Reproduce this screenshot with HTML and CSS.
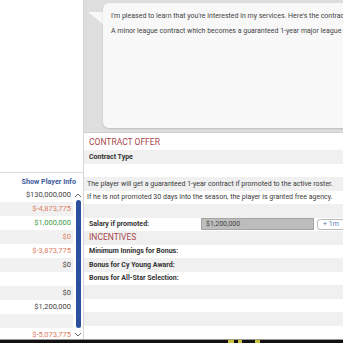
FILE: index.html
```html
<!DOCTYPE html>
<html lang="en">
<head>
    <meta charset="UTF-8">
    <meta name="viewport" content="width=device-width, initial-scale=1.0">
    <title>Contract Offer</title>
    <link rel="stylesheet" href="styles.css">
</head>
<body>
    <div class="screen">
        <aside class="side">
            <div class="side-top"></div>
            <div class="side-list">
                <div class="side-head">Show Player Info</div>
                <div class="side-body">
                    <div class="values">
                        <div class="val">$130,000,000</div>
                        <div class="val neg">$-4,873,775</div>
                        <div class="val pos">$1,000,000</div>
                        <div class="val neg">$0</div>
                        <div class="val neg">$-3,873,775</div>
                        <div class="val">$0</div>
                        <div class="val"></div>
                        <div class="val">$0</div>
                        <div class="val">$1,200,000</div>
                        <div class="val"></div>
                        <div class="val neg">$-5,073,775</div>
                    </div>
                    <div class="scroll">
                        <svg class="arrow" viewBox="0 0 8 6" width="8" height="6"><path d="M1 5 L4 2 L7 5" fill="none" stroke="#666" stroke-width="1"/></svg>
                        <div class="thumb"></div>
                        <svg class="arrow" viewBox="0 0 8 6" width="8" height="6"><path d="M1 1 L4 4 L7 1" fill="none" stroke="#666" stroke-width="1"/></svg>
                    </div>
                </div>
            </div>
        </aside>

        <main class="main">
            <div class="chat">
                <div class="bubble">
                    <p>I'm pleased to learn that you're interested in my services. Here's the contract I'm looking for.</p>
                    <p>A minor league contract which becomes a guaranteed 1-year major league contract if I'm promoted.</p>
                </div>
            </div>

            <div class="panel">
                <div class="title">Contract Offer</div>
                <div class="row alt"><span class="label">Contract Type</span><span class="dot"></span></div>
                <div class="row"></div>
                <div class="row alt">The player will get a guaranteed 1-year contract if promoted to the active roster.</div>
                <div class="row">If he is not promoted 30 days into the season, the player is granted free agency.</div>
                <div class="row alt"></div>
                <div class="row">
                    <span class="label">Salary if promoted:</span>
                    <span class="salary">$1,200,000</span>
                    <span class="bump">+ 1m</span>
                </div>
                <div class="row alt title sub">Incentives</div>
                <div class="row"><span class="label">Minimum Innings for Bonus:</span><span class="box"></span></div>
                <div class="row alt"><span class="label">Bonus for Cy Young Award:</span><span class="box"></span></div>
                <div class="row"><span class="label">Bonus for All-Star Selection:</span><span class="box"></span></div>
                <div class="row alt"></div>
                <div class="row"></div>
                <div class="row alt"></div>
                <div class="row"></div>
            </div>
        </main>
    </div>

    <div class="footer">
        <span class="glow g1"></span>
        <span class="glow g2"></span>
        <span class="glow g3"></span>
    </div>
</body>
</html>
```

FILE: styles.css
```css
* {
    box-sizing: border-box;
    margin: 0;
    padding: 0;
}

body {
    width: 343px;
    height: 343px;
    overflow: hidden;
    background-color: white;
    font-family: Roboto, "Liberation Sans", Arial, sans-serif;
    font-size: 7px;
    color: #3a3a3a;
}

.screen {
    display: grid;
    grid-template-columns: 84px 1fr;
    height: 339px;
    overflow: hidden;
}

/* left column */
.side {
    border-right: 1px solid #d6d6d6;
    overflow: hidden;
    font-size: 7.5px;
}

.side-top {
    height: 172px;
}

.side-list {
    border-top: 1px solid #dcdcdc;
}

.side-head {
    height: 15px;
    padding-right: 7px;
    text-align: right;
    font-weight: 700;
    font-size: 7.2px;
    color: #3d5c9c;
    line-height: 17px;
}

.side-body {
    display: flex;
}

.values {
    flex: 1;
}

.val {
    height: 14px;
    line-height: 14px;
    padding-right: 2px;
    text-align: right;
    color: #444;
}

.val:nth-child(even) {
    background-color: #f1f1f1;
}

.val.neg {
    color: #de7d62;
}

.val.pos {
    color: #3d9b45;
}

.scroll {
    width: 10px;
    display: flex;
    flex-direction: column;
    align-items: center;
    padding-top: 4px;
}

.arrow {
    display: block;
}

.thumb {
    width: 5px;
    height: 128px;
    margin: 2px 0 4px 0;
    border-radius: 3px;
    background-color: #2c4f9e;
}

/* right side */
.main {
    display: flex;
    flex-direction: column;
}

.chat {
    height: 133px;
    padding: 3px 0 0 19px;
    background-color: #dedede;
    border-bottom: 1px solid #cfcfcf;
}

.bubble {
    position: relative;
    height: 125px;
    padding: 8px 8px;
    background-color: #f8f8f8;
    border-radius: 6px 0 0 6px;
    box-shadow: 0 1px 2px rgba(0, 0, 0, 0.15);
    white-space: nowrap;
    overflow: hidden;
}

.chat {
    position: relative;
}

.chat::before {
    content: "";
    position: absolute;
    left: 4px;
    top: 12px;
    width: 16px;
    height: 13px;
    background-color: #f8f8f8;
    clip-path: polygon(0 0, 100% 0, 100% 100%);
}

.bubble p {
    line-height: 10px;
    margin-bottom: 5px;
    color: #444;
}

.panel {
    flex: 1;
    white-space: nowrap;
}

.title {
    height: 17px;
    padding: 4px 0 0 5px;
    font-size: 8.5px;
    text-transform: uppercase;
    color: #a8454a;
    line-height: 11px;
}

.row {
    display: flex;
    align-items: center;
    height: 13.5px;
    padding-left: 3px;
}

.row.alt {
    background-color: #f0f0f0;
}

.row.sub {
    padding: 0 0 0 5px;
    height: 13.5px;
}

.label {
    font-weight: 700;
    width: 114px;
    padding-left: 2px;
    color: #333;
}

.dot {
    margin-left: auto;
    width: 10px;
    height: 10px;
    margin-right: -5px;
    border-radius: 50%;
    background-color: #7a7a7a;
}

.salary {
    width: 113px;
    height: 12px;
    line-height: 11px;
    padding-left: 4px;
    background-color: #bdbdbd;
    border: 1px solid #a5a5a5;
    color: #444;
}

.bump {
    margin-left: 3px;
    width: 30px;
    height: 11px;
    line-height: 9px;
    padding-left: 5px;
    border: 1px solid #b9b9b9;
    border-radius: 3px;
    background-color: white;
    color: #5a78b0;
}

.box {
    margin-left: auto;
    width: 6px;
    height: 11px;
    margin-right: -2px;
    background-color: #b5b5b5;
    border: 1px solid #9a9a9a;
}

/* bottom strip */
.footer {
    position: relative;
    height: 4px;
    background-color: #111;
    border-top: 1px solid #9a9a9a;
}

.glow {
    position: absolute;
    top: 0;
    height: 3px;
    background-color: #c8c23a;
}

.g1 { left: 228px; width: 6px; }
.g2 { left: 238px; width: 4px; }
.g3 { left: 255px; width: 5px; }
```
